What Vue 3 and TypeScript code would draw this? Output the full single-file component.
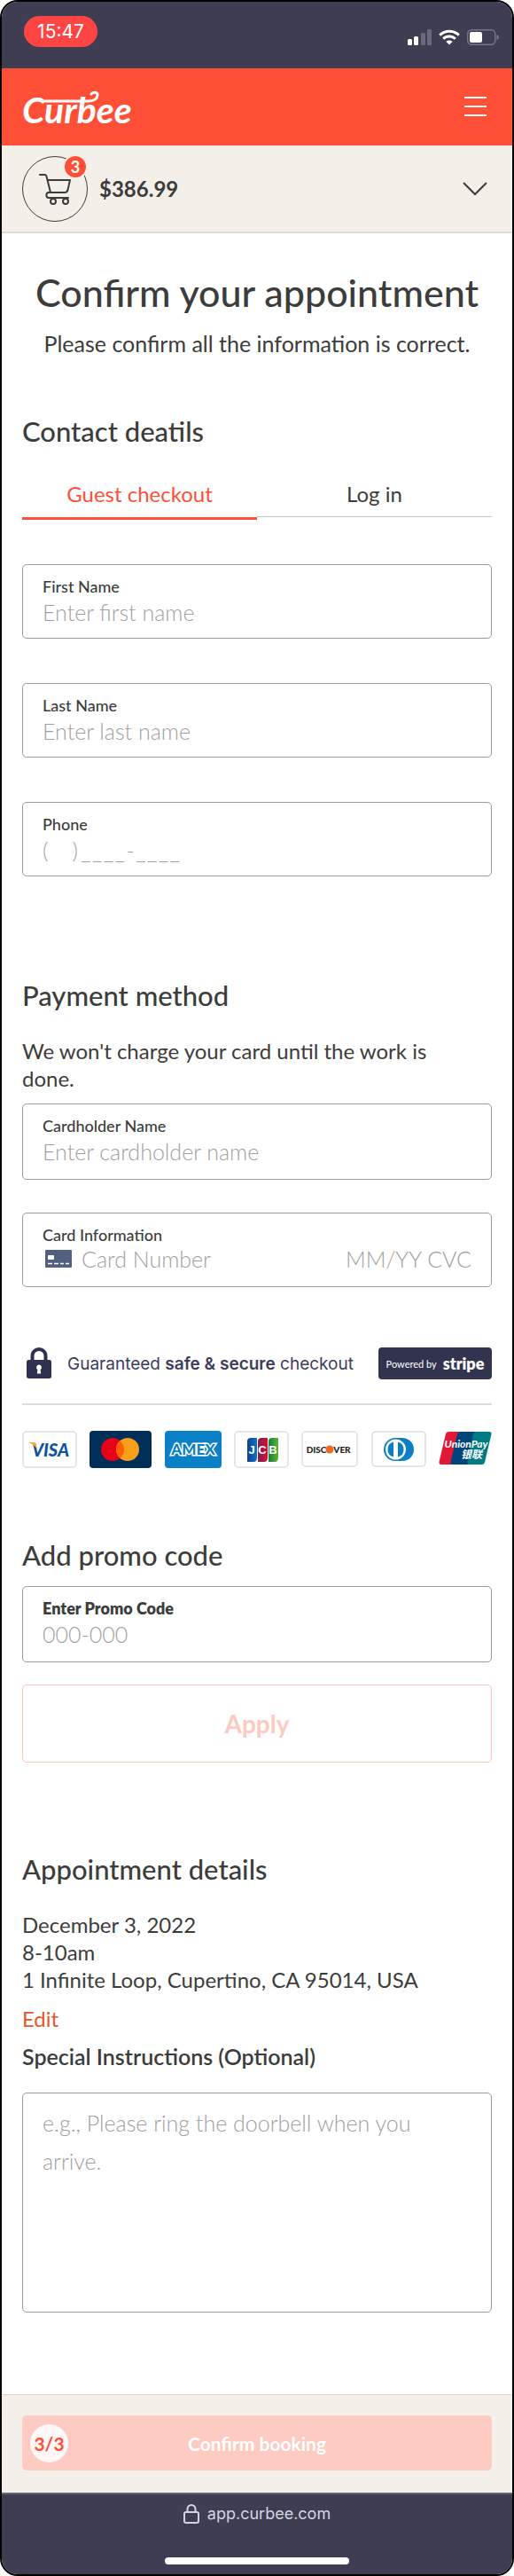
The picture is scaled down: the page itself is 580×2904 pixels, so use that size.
<script setup lang="ts">
import { ref } from 'vue'

interface Field {
  id: string
  label: string
  placeholder: string
  type: string
}

const contactFields: Field[] = [
  { id: 'first-name', label: 'First Name', placeholder: 'Enter first name', type: 'text' },
  { id: 'last-name', label: 'Last Name', placeholder: 'Enter last name', type: 'text' },
  { id: 'phone', label: 'Phone', placeholder: '(\u00a0\u00a0\u00a0\u00a0)\u2009_\u200a_\u200a_\u200a_\u200a-\u200a_\u200a_\u200a_\u200a_', type: 'tel' },
]

const tabs = ['Guest checkout', 'Log in']
const activeTab = ref(0)
const appointment = ['December 3, 2022', '8-10am', '1 Infinite Loop, Cupertino, CA 95014, USA']
</script>

<template>
  <div class="phone">
    <div class="status">
      <span class="time">15:47</span>
      <div class="indicators">
        <svg width="27" height="18" viewBox="0 0 27 18" aria-hidden="true">
          <rect x="0" y="11" width="5" height="7" rx="1.5" fill="#fff" />
          <rect x="7" y="8" width="5" height="10" rx="1.5" fill="#fff" />
          <rect x="15" y="4" width="5" height="14" rx="1.5" fill="#6b6a7c" />
          <rect x="22" y="0" width="5" height="18" rx="1.5" fill="#6b6a7c" />
        </svg>
        <svg width="24" height="18" viewBox="0 0 24 18" aria-hidden="true" fill="none" stroke="#fff" stroke-width="3">
          <path d="M1.2 6.6a15.3 15.3 0 0 1 21.6 0" />
          <path d="M5.2 10.8a9.6 9.6 0 0 1 13.6 0" />
          <path d="M12 17.6 8.4 14a5.1 5.1 0 0 1 7.2 0z" fill="#fff" stroke="none" />
        </svg>
        <svg width="36" height="18" viewBox="0 0 36 18" aria-hidden="true">
          <rect x="0.75" y="0.75" width="31" height="16.5" rx="4.5" fill="none" stroke="#777687" stroke-width="1.5" />
          <rect x="3" y="3" width="14" height="12" rx="2" fill="#fff" />
          <path d="M33.5 6v6c1.6-.5 2.5-1.6 2.5-3s-.9-2.5-2.5-3z" fill="#777687" />
        </svg>
      </div>
    </div>

    <header class="brand">
      <a class="logo" href="#" aria-label="Curbee home">
        <svg width="130" height="60" viewBox="0 0 130 60" aria-hidden="true">
          <text x="0" y="48" class="wordmark">Curbee</text>
          <path d="M26 23h48c7 0 11-3 11-7 0-3-4-4-7-1" fill="none" stroke="#fff" stroke-width="3" stroke-linecap="round" />
        </svg>
      </a>
      <button class="icon-button" type="button" aria-label="Menu">
        <svg width="26" height="26" viewBox="0 0 26 26" stroke="#fff" stroke-width="2">
          <path d="M0 2h25M0 12h25M0 22h25" />
        </svg>
      </button>
    </header>

    <section class="cart">
      <div class="cart-icon">
        <svg width="38" height="38" viewBox="0 0 38 38" fill="none" stroke="#3c3c3b" stroke-width="2" stroke-linecap="round" stroke-linejoin="round" aria-hidden="true">
          <path d="M2 3h5.5c1 0 1.6.5 1.9 1.5L14 23" />
          <path d="M11 9h25l-2.5 11c-.5 2-1.5 3-3.5 3H12c-3.500 0-3.500 6 0 6h22" />
          <circle cx="17" cy="33" r="3" />
          <circle cx="31" cy="33" r="3" />
        </svg>
        <span class="badge">3</span>
      </div>
      <strong class="total">$386.99</strong>
      <button class="icon-button" type="button" aria-label="Show cart">
        <svg width="28" height="16" viewBox="0 0 28 16" fill="none" stroke="#3c3c3b" stroke-width="2">
          <path d="M1 1l13 13L27 1" />
        </svg>
      </button>
    </section>

    <main class="content">
      <h1>Confirm your appointment</h1>
      <p class="lead">Please confirm all the information is correct.</p>

      <section class="contact">
        <h2>Contact deatils</h2>
        <div class="tabs" role="tablist">
          <button
            v-for="(tab, i) in tabs"
            :key="tab"
            type="button"
            role="tab"
            class="tab"
            :class="{ active: activeTab === i }"
            :aria-selected="activeTab === i"
            @click="activeTab = i"
          >{{ tab }}</button>
        </div>
        <div class="stack">
          <div v-for="f in contactFields" :key="f.id" class="field">
            <label :for="f.id">{{ f.label }}</label>
            <input :id="f.id" :type="f.type" :placeholder="f.placeholder" />
          </div>
        </div>
      </section>

      <section class="payment">
        <h2>Payment method</h2>
        <p class="note">We won't charge your card until the work is done.</p>
        <div class="field tall">
          <label for="holder">Cardholder Name</label>
          <input id="holder" type="text" placeholder="Enter cardholder name" />
        </div>
        <div class="field tall card-field">
          <label for="card-number">Card Information</label>
          <div class="card-row">
            <svg width="30" height="20" viewBox="0 0 30 20" aria-hidden="true">
              <rect width="30" height="20" rx="1" fill="#525f7f" />
              <rect x="3" y="6" width="7" height="5" rx="1" fill="#fff" />
              <path d="M3 15.5h5M10 15.5h5M17 15.5h4M23 15.5h4" stroke="#fff" stroke-width="1.5" />
            </svg>
            <input id="card-number" class="number" type="text" placeholder="Card Number" />
            <input class="expiry" type="text" placeholder="MM/YY" aria-label="Expiry date" />
            <input class="cvc" type="text" placeholder="CVC" aria-label="CVC" />
          </div>
        </div>

        <div class="trust">
          <svg width="28" height="36" viewBox="0 0 28 36" aria-hidden="true">
            <path d="M6.5 15V9.500a7.500 7.500 0 0 1 15 0V15" fill="none" stroke="#2f3150" stroke-width="4" />
            <rect y="14" width="28" height="21" rx="2.5" fill="#2f3150" />
            <path d="M14 19.500a3 3 0 0 0-1.600 5.500l-.6 4.500h4.400l-.6-4.500a3 3 0 0 0-1.600-5.500z" fill="#fff" />
          </svg>
          <p>Guaranteed <b>safe &amp; secure</b> checkout</p>
          <div class="stripe"><span>Powered by</span><b>stripe</b></div>
        </div>

        <div class="cards">
          <svg width="62" height="42" viewBox="0 0 62 42" role="img" aria-label="Visa">
            <rect x="1" y="1" width="60" height="40" rx="4" fill="#fff" stroke="#dcdce4" stroke-width="1.5" />
            <text x="32" y="29" class="visa">VISA</text>
            <path d="M7 13h6c1.500 0 2.200.8 2.500 2l1.200 5.500C14.500 17 11.500 14.500 7 13z" fill="#f7a823" />
          </svg>
          <svg width="70" height="42" viewBox="0 0 70 42" role="img" aria-label="Mastercard">
            <rect width="70" height="42" rx="4" fill="#00305a" />
            <circle cx="26" cy="21" r="13" fill="#eb001b" />
            <circle cx="43" cy="21" r="13" fill="#f79e1b" />
            <path d="M34.500 11.200a13 13 0 0 1 0 19.600 13 13 0 0 1 0-19.600z" fill="#ff5f00" />
          </svg>
          <svg width="64" height="42" viewBox="0 0 64 42" role="img" aria-label="American Express">
            <rect width="64" height="42" rx="4" fill="#0a80c6" />
            <text x="32" y="27" class="amex">AMEX</text>
          </svg>
          <svg width="62" height="42" viewBox="0 0 62 42" role="img" aria-label="JCB">
            <defs>
              <linearGradient id="jcb-blue"><stop offset="0" stop-color="#123f91" /><stop offset="1" stop-color="#0875c5" /></linearGradient>
              <linearGradient id="jcb-red"><stop offset="0" stop-color="#75254d" /><stop offset="1" stop-color="#e00938" /></linearGradient>
              <linearGradient id="jcb-green"><stop offset="0" stop-color="#167c38" /><stop offset="1" stop-color="#5bb531" /></linearGradient>
            </defs>
            <rect x="1" y="1" width="60" height="40" rx="4" fill="#fff" stroke="#dcdce4" stroke-width="1.5" />
            <path d="M15 12q0-4 4-4h7v22q0 5-4 5h-7z" fill="url(#jcb-blue)" />
            <path d="M27 12q0-4 4-4h7v22q0 5-4 5h-7z" fill="url(#jcb-red)" />
            <path d="M39 12q0-4 4-4h7v22q0 5-4 5h-7z" fill="url(#jcb-green)" />
            <text x="20" y="26" class="jcb">J</text>
            <text x="32" y="26" class="jcb">C</text>
            <text x="44" y="26" class="jcb">B</text>
          </svg>
          <svg width="64" height="42" viewBox="0 0 64 42" role="img" aria-label="Discover">
            <rect x="1" y="1" width="62" height="39" rx="4" fill="#fff" stroke="#dcdce4" stroke-width="1.5" />
            <text x="17" y="25" class="discover">DISC</text>
            <circle cx="32" cy="21" r="4.500" fill="#f26722" />
            <text x="46" y="25" class="discover">VER</text>
          </svg>
          <svg width="62" height="42" viewBox="0 0 62 42" role="img" aria-label="Diners Club">
            <rect x="1" y="1" width="60" height="39" rx="4" fill="#fff" stroke="#dcdce4" stroke-width="1.5" />
            <path d="M27 8h8a13 13 0 0 1 0 26h-8a13 13 0 0 1 0-26z" fill="#0a7fc5" />
            <circle cx="27.500" cy="21" r="11.500" fill="#fff" />
            <path d="M25 12.500a8.800 8.800 0 0 0 0 17zM30 12.500a8.800 8.800 0 0 1 0 17z" fill="#0a7fc5" />
          </svg>
          <svg width="60" height="42" viewBox="0 0 60 42" role="img" aria-label="UnionPay">
            <path d="M11 1h14l-9 37H3q-3 0-2.500-3L8 3.500Q8.600 1 11 1z" fill="#e21836" />
            <path d="M24 1h19l-9 37H15q-2 0-1.500-3L21 3.500Q21.600 1 24 1z" fill="#00447c" />
            <path d="M42 1h15q3 0 2.500 2.500L52 35.500q-.7 2.500-3 2.500H34q-2 0-1.500-3L39 3.500Q39.600 1 42 1z" fill="#007b84" />
            <text x="31" y="19" class="union">UnionPay</text>
            <text x="37" y="31" class="union-cn">银联</text>
          </svg>
        </div>
      </section>

      <section class="promo">
        <h2>Add promo code</h2>
        <div class="field tall strong">
          <label for="promo">Enter Promo Code</label>
          <input id="promo" type="text" placeholder="000-000" />
        </div>
        <button class="apply" type="button">Apply</button>
      </section>

      <section class="details">
        <h2>Appointment details</h2>
        <p class="lines"><span v-for="line in appointment" :key="line">{{ line }}</span></p>
        <a class="edit" href="#">Edit</a>
        <label class="instructions-label" for="instructions">Special Instructions (Optional)</label>
        <textarea id="instructions" placeholder="e.g., Please ring the doorbell when you arrive."></textarea>
      </section>
    </main>

    <footer class="confirm-bar">
      <button class="confirm" type="button">
        <span class="step">3/3</span>
        <span>Confirm booking</span>
      </button>
    </footer>

    <div class="browser">
      <div class="address">
        <svg width="18" height="22" viewBox="0 0 18 22" fill="none" stroke="#d5d4e2" stroke-width="2" aria-hidden="true">
          <rect x="1" y="9" width="16" height="12" rx="2" />
          <path d="M4.500 9V5.500a4.500 4.500 0 0 1 9 0V9" />
        </svg>
        <span>app.curbee.com</span>
      </div>
      <div class="home"></div>
    </div>
  </div>
</template>

<style>
body {
  margin: 0;
  background: #fff;
}
</style>

<style scoped>
* {
  box-sizing: border-box;
}

.phone {
  display: flex;
  flex-direction: column;
  min-height: 100vh;
  overflow: hidden;
  border: 2px solid #000;
  border-radius: 20px;
  background: #fff;
  color: #3c3c3b;
  font-family: Lato, "Noto Sans", sans-serif;
  font-size: 24px;
  line-height: 31px;
}

h1, h2, p { margin: 0; }
svg { display: block; flex: none; }

button, input, textarea {
  margin: 0;
  padding: 0;
  border: 0;
  background: none;
  color: inherit;
  font: inherit;
}

.status {
  display: flex;
  align-items: flex-start;
  justify-content: space-between;
  height: 75px;
  padding: 16px 15px 0 25px;
  background: #3e3d51;
}

.time {
  width: 83px;
  border-radius: 18px;
  background: #ff4444;
  color: #fff;
  font-family: Inter, "Liberation Sans", sans-serif;
  font-size: 21px;
  line-height: 35px;
  text-align: center;
}

.indicators {
  display: flex;
  gap: 8px;
  padding-top: 15px;
}

.brand {
  display: flex;
  align-items: center;
  justify-content: space-between;
  height: 87px;
  padding: 0 28px 0 23px;
  background: #ff5037;
}

.wordmark {
  fill: #fff;
  font-size: 41px;
  font-style: italic;
  font-weight: 700;
}

.icon-button { cursor: pointer; }

.cart {
  display: flex;
  align-items: center;
  height: 99px;
  padding: 0 28px 0 23px;
  border-bottom: 2px solid #dedad6;
  background: #f4f0e9;
}

.cart-icon {
  position: relative;
  display: grid;
  place-items: center;
  width: 74px;
  height: 74px;
  border: 1px solid #3c3c3b;
  border-radius: 50%;
}

.badge {
  position: absolute;
  top: -3px;
  right: -1px;
  width: 28px;
  height: 28px;
  border: 2px solid #f4f0e9;
  border-radius: 50%;
  background: #ff5037;
  color: #fff;
  font-size: 18px;
  font-weight: 700;
  line-height: 24px;
  text-align: center;
}

.total {
  flex: 1;
  padding-left: 13px;
  font-weight: 700;
}

.content {
  flex: 1;
  padding: 39px 23px 92px;
}

h1 {
  font-size: 43px;
  font-weight: 500;
  line-height: 56px;
  text-align: center;
}

.lead {
  margin-top: 14px;
  font-size: 25px;
  text-align: center;
}

h2 {
  font-size: 31px;
  font-weight: 500;
  line-height: 38px;
}

.contact { margin-top: 64px; }

.tabs {
  display: flex;
  margin-top: 36px;
}

.tab {
  flex: 1;
  padding-bottom: 11px;
  border-bottom: 3px solid transparent;
  box-shadow: inset 0 -1px #c4c4c4;
  cursor: pointer;
}

.tab.active {
  border-color: #ff5037;
  box-shadow: none;
  color: #ff5037;
}

.stack {
  display: flex;
  flex-direction: column;
  gap: 50px;
  margin-top: 50px;
}

.field {
  display: flex;
  flex-direction: column;
  gap: 2px;
  padding: 13px 22px;
  border: 1px solid #9b9b9b;
  border-radius: 5px;
}

.field.tall { padding-bottom: 15px; }

.field label {
  font-size: 18px;
  font-weight: 500;
  line-height: 22px;
}

.field.strong label { font-weight: 800; }

.field input {
  width: 100%;
  height: 32px;
  outline: 0;
  font-size: 25px;
}

input::placeholder, textarea::placeholder {
  color: #a0a0a0;
  font-weight: 300;
  opacity: 1;
}

.payment { margin-top: 115px; }

.note {
  margin: 28px 0 13px;
  padding-right: 40px;
}

.card-field { margin-top: 37px; }

.card-row {
  display: flex;
  align-items: center;
  margin-top: -2px;
  padding-left: 3px;
}

.card-row .number {
  flex: 1;
  min-width: 0;
  margin-left: 11px;
}

.card-row .expiry { width: 86px; }
.card-row .cvc { width: 56px; text-align: right; }

.trust {
  display: flex;
  align-items: center;
  margin-top: 68px;
  padding: 0 0 27px 5px;
  border-bottom: 2px solid #dcdce4;
  color: #3c3d5c;
  font-family: Inter, "Liberation Sans", sans-serif;
  font-size: 19px;
}

.trust p {
  flex: 1;
  padding-left: 18px;
  white-space: nowrap;
}

.trust b { font-weight: 600; }

.stripe {
  display: flex;
  align-items: center;
  justify-content: center;
  gap: 7px;
  width: 128px;
  height: 36px;
  border-radius: 4px;
  background: #32344f;
  color: #fff;
  font-family: Lato, sans-serif;
  font-size: 11px;
}

.stripe b {
  font-size: 18px;
  font-weight: 800;
  line-height: 24px;
}

.cards {
  display: flex;
  justify-content: space-between;
  margin-top: 29px;
}

.cards text { text-anchor: middle; }
.visa { fill: #0b539c; font: italic 900 20px Lato, sans-serif; }
.amex { fill: #0a80c6; stroke: #fff; stroke-width: 3px; paint-order: stroke; font: 900 17px Lato, sans-serif; }
.jcb { fill: #fff; font: 700 13px "Liberation Sans", sans-serif; }
.discover { fill: #222; font: 900 10px Lato, sans-serif; }
.union { fill: #fff; font: italic 700 12px Lato, sans-serif; }
.union-cn { fill: #fff; font: italic 700 12px "Noto Sans CJK SC", sans-serif; }

.promo { margin-top: 79px; }
.promo .field { margin-top: 16px; }

.apply {
  width: 100%;
  height: 88px;
  margin-top: 25px;
  border: 1px solid #fdc4b9;
  border-radius: 5px;
  color: #fdcac1;
  font-size: 28px;
  font-weight: 700;
}

.details {
  display: flex;
  flex-direction: column;
  margin-top: 101px;
}

.lines {
  display: flex;
  flex-direction: column;
  margin-top: 28px;
}

.edit {
  align-self: flex-start;
  margin-top: 13px;
  color: #e8562a;
  text-decoration: none;
}

.instructions-label {
  margin-top: 12px;
  font-size: 25px;
  font-weight: 600;
}

textarea {
  display: block;
  width: 100%;
  height: 248px;
  margin-top: 25px;
  padding: 12px 60px 12px 22px;
  border: 1px solid #9b9b9b;
  border-radius: 5px;
  font-size: 25px;
  line-height: 43px;
  resize: none;
}

.confirm-bar {
  padding: 23px 23px 25px;
  border-top: 1px solid #dad6d0;
  background: #f4f0e9;
}

.confirm {
  position: relative;
  display: block;
  width: 100%;
  height: 62px;
  border-radius: 5px;
  background: #fdcbc1;
  color: #fff;
  font-size: 21px;
  font-weight: 700;
}

.step {
  position: absolute;
  top: 10px;
  left: 9px;
  width: 43px;
  height: 43px;
  border-radius: 50%;
  background: #fff8f7;
  color: #ff5037;
  line-height: 43px;
}

.browser {
  display: flex;
  flex-direction: column;
  align-items: center;
  justify-content: space-between;
  height: 92px;
  padding: 8px 0 11px;
  border-top: 2px solid #64637a;
  background: #3e3d51;
  color: #d5d4e2;
}

.address {
  display: flex;
  align-items: center;
  gap: 9px;
  font-family: Inter, "Liberation Sans", sans-serif;
  font-size: 18px;
  line-height: 28px;
}

.home {
  width: 36%;
  height: 8px;
  border-radius: 4px;
  background: #fff;
}
</style>
